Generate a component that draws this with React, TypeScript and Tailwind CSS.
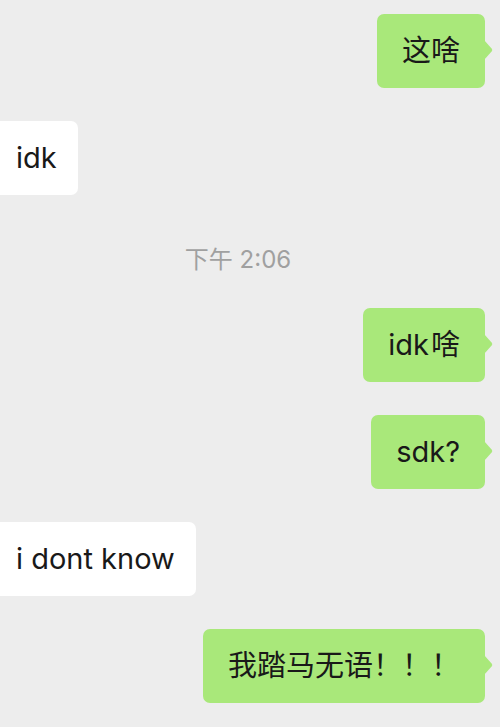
import * as React from 'react'

// Chat transcript, WeChat style. Left column is cropped off-screen.

type Msg =
  | { kind: 'out'; text: React.ReactNode }
  | { kind: 'in'; text: React.ReactNode }
  | { kind: 'time'; text: string }

const messages: Msg[] = [
  { kind: 'out', text: '这啥' },
  { kind: 'in', text: 'idk' },
  { kind: 'time', text: '下午 2:06' },
  {
    kind: 'out',
    text: (
      <>
        idk<span className="ml-[2px]">啥</span>
      </>
    ),
  },
  { kind: 'out', text: 'sdk?' },
  { kind: 'in', text: 'i dont know' },
  { kind: 'out', text: '我踏马无语！！！' },
]

const font = { fontFamily: 'Inter, "Noto Sans CJK SC", sans-serif' }

function Tail() {
  return (
    <svg
      className="absolute right-[-9px] top-[26px]"
      width="10"
      height="20"
      viewBox="0 0 10 20"
    >
      <path d="M0 0 L7.6 8.4 Q9 10 7.6 11.6 L0 20 Z" fill="#a9e87a" />
    </svg>
  )
}

function OutBubble({ text }: { text: React.ReactNode }) {
  return (
    <div className="flex justify-end pr-[15px]">
      <div className="relative flex h-[74px] items-center rounded-[7px] bg-[#a9e87a] px-[25px] text-[29px] leading-[74px] text-[#191919]">
        {text}
        <Tail />
      </div>
    </div>
  )
}

function InBubble({ text }: { text: React.ReactNode }) {
  return (
    <div className="flex justify-start">
      <div className="ml-[-8px] flex h-[74px] items-center rounded-[7px] bg-white pl-[24px] pr-[21px] text-[29px] leading-[74px] text-[#191919]">
        {text}
      </div>
    </div>
  )
}

function TimeStamp({ text }: { text: string }) {
  return (
    <div className="flex h-[47px] justify-center pr-[24px] pt-[20px]">
      <span className="text-[24px] leading-[24px] text-[#a0a0a0]">{text}</span>
    </div>
  )
}

export default function App() {
  return (
    <div
      className="flex h-[727px] w-[500px] flex-col gap-[33px] overflow-hidden bg-[#ededed] pt-[14px]"
      style={font}
    >
      {messages.map((m, i) => {
        if (m.kind === 'time') return <TimeStamp key={i} text={m.text} />
        if (m.kind === 'in') return <InBubble key={i} text={m.text} />
        return <OutBubble key={i} text={m.text} />
      })}
    </div>
  )
}
